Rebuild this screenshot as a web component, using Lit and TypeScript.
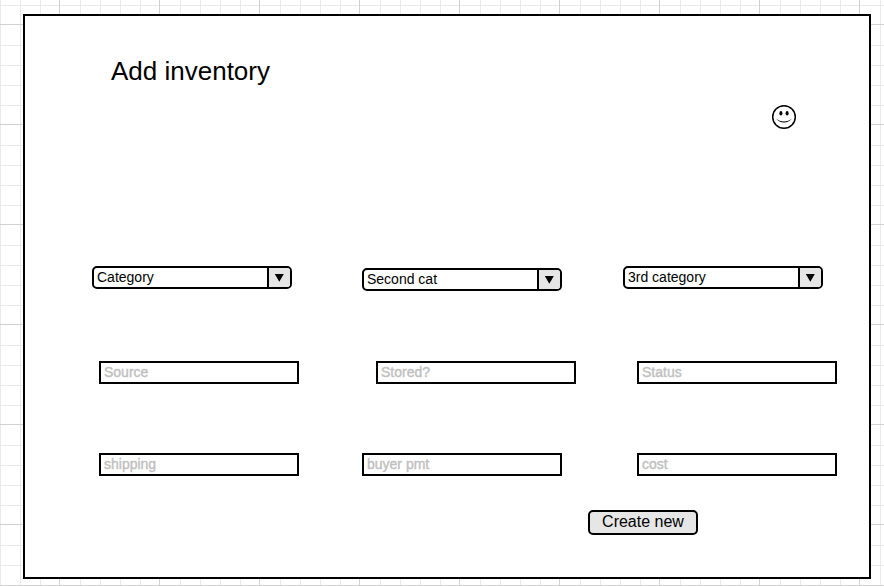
import { LitElement, html, css, svg } from "lit";
import { customElement, property } from "lit/decorators.js";

@customElement("wire-select")
class WireSelect extends LitElement {
  @property() label = "";
  static styles = css`
    :host { display: block; width: 200px; height: 23px; }
    .box {
      box-sizing: border-box; width: 200px; height: 23px; display: flex;
      border: 2px solid #000; border-radius: 5px; background: #fff; overflow: hidden;
    }
    .text { flex: 1; padding-left: 3px; font-size: 14px; line-height: 18px; color: #000; white-space: nowrap; }
    .arrow { width: 21px; border-left: 2px solid #000; background: #e6e6e6; display: flex; }
    svg { display: block; width: 21px; height: 19px; }
  `;
  render() {
    return html`<div class="box">
      <span class="text">${this.label}</span>
      <span class="arrow"><svg viewBox="0 0 21 19"><path d="M5.8 6H14.8L10.3 13.8Z" /></svg></span>
    </div>`;
  }
}

@customElement("wire-input")
class WireInput extends LitElement {
  @property() label = "";
  static styles = css`
    :host { display: block; width: 200px; height: 23px; }
    .box {
      box-sizing: border-box; width: 200px; height: 23px; border: 2px solid #000; background: #fff;
      padding-left: 3px; font-size: 14px; line-height: 18px; color: #bfbfbf;
      -webkit-text-stroke: 0.4px #bfbfbf; white-space: nowrap;
    }
  `;
  render() {
    return html`<div class="box">${this.label}</div>`;
  }
}

const minorX = [0, 20, 40, 80];
const minorY = [5, 45, 65, 85];

@customElement("app-root")
class AppRoot extends LitElement {
  static styles = css`
    :host {
      display: grid; width: 884px; height: 586px; overflow: hidden; background: #fff;
      font-family: "Liberation Sans", Arial, sans-serif; color: #000;
    }
    .grid, .panel { grid-area: 1 / 1; }
    .grid { display: block; width: 884px; height: 586px; }
    .minor { fill: #e9e9e9; }
    .major { fill: #d0d0d0; }
    .panel {
      box-sizing: border-box; width: 848px; height: 565px; margin: 14px 0 0 23px;
      border: 2px solid #000; background: #fff; z-index: 1;
    }
    h1 { margin: 40px 0 0 86px; font-size: 26px; line-height: 30px; font-weight: 400; height: 30px; white-space: nowrap; }
    .face { display: block; width: 26px; height: 26px; margin: 18px 0 0 746px; }
    .row { display: flex; height: 23px; }
    .selects { margin: 136px 0 0 67px; }
    .selects .second { margin: 2px 61px 0 70px; }
    .first-inputs { margin: 72px 0 0 74px; }
    .first-inputs .second { margin: 0 61px 0 77px; }
    .last-inputs { margin: 69px 0 0 74px; }
    .last-inputs .second { margin: 0 75px 0 63px; }
    .button {
      display: block; box-sizing: border-box; width: 110px; height: 25px; margin: 34px 0 0 563px; padding: 0 0 2px;
      border: 2px solid #000; border-radius: 5px; background: #e6e6e6; color: #000;
      font: 16px/19px "Liberation Sans", Arial, sans-serif; text-align: center; white-space: nowrap;
    }
  `;
  render() {
    const tiles = Array.from({ length: 9 }, (_, i) => i * 100);
    return html`
      <svg class="grid" viewBox="0 0 884 586" shape-rendering="crispEdges">
        ${tiles.map((t) => svg`
          ${minorX.map((x) => svg`<rect class="minor" x=${t + x} y="0" width="1" height="586" />`)}
          ${minorY.map((y) => svg`<rect class="minor" x="0" y=${t + y} width="884" height="1" />`)}`)}
        ${tiles.map((t) => svg`
          <rect class="major" x=${t + 59} y="0" width="1" height="586" />
          <rect class="major" x="0" y=${t + 24} width="884" height="1" />`)}
        <rect class="major" x="0" y="585" width="884" height="1" />
      </svg>
      <main class="panel">
        <h1>Add inventory</h1>
        <svg class="face" viewBox="0 0 26 26">
          <circle cx="13" cy="13" r="11.3" fill="none" stroke="#000" stroke-width="1.5" />
          <ellipse cx="9.9" cy="9.3" rx="1.5" ry="2.3" />
          <ellipse cx="16.1" cy="9.3" rx="1.5" ry="2.3" />
          <path d="M5.2 14.4C9 18.4 17 18.4 20.8 14.4C17.4 19.9 8.6 19.9 5.2 14.4Z" />
        </svg>
        <div class="row selects">
          <wire-select label="Category"></wire-select>
          <wire-select class="second" label="Second cat"></wire-select>
          <wire-select label="3rd category"></wire-select>
        </div>
        <div class="row first-inputs">
          <wire-input label="Source"></wire-input>
          <wire-input class="second" label="Stored?"></wire-input>
          <wire-input label="Status"></wire-input>
        </div>
        <div class="row last-inputs">
          <wire-input label="shipping"></wire-input>
          <wire-input class="second" label="buyer pmt"></wire-input>
          <wire-input label="cost"></wire-input>
        </div>
        <button class="button">Create new</button>
      </main>
    `;
  }
}
